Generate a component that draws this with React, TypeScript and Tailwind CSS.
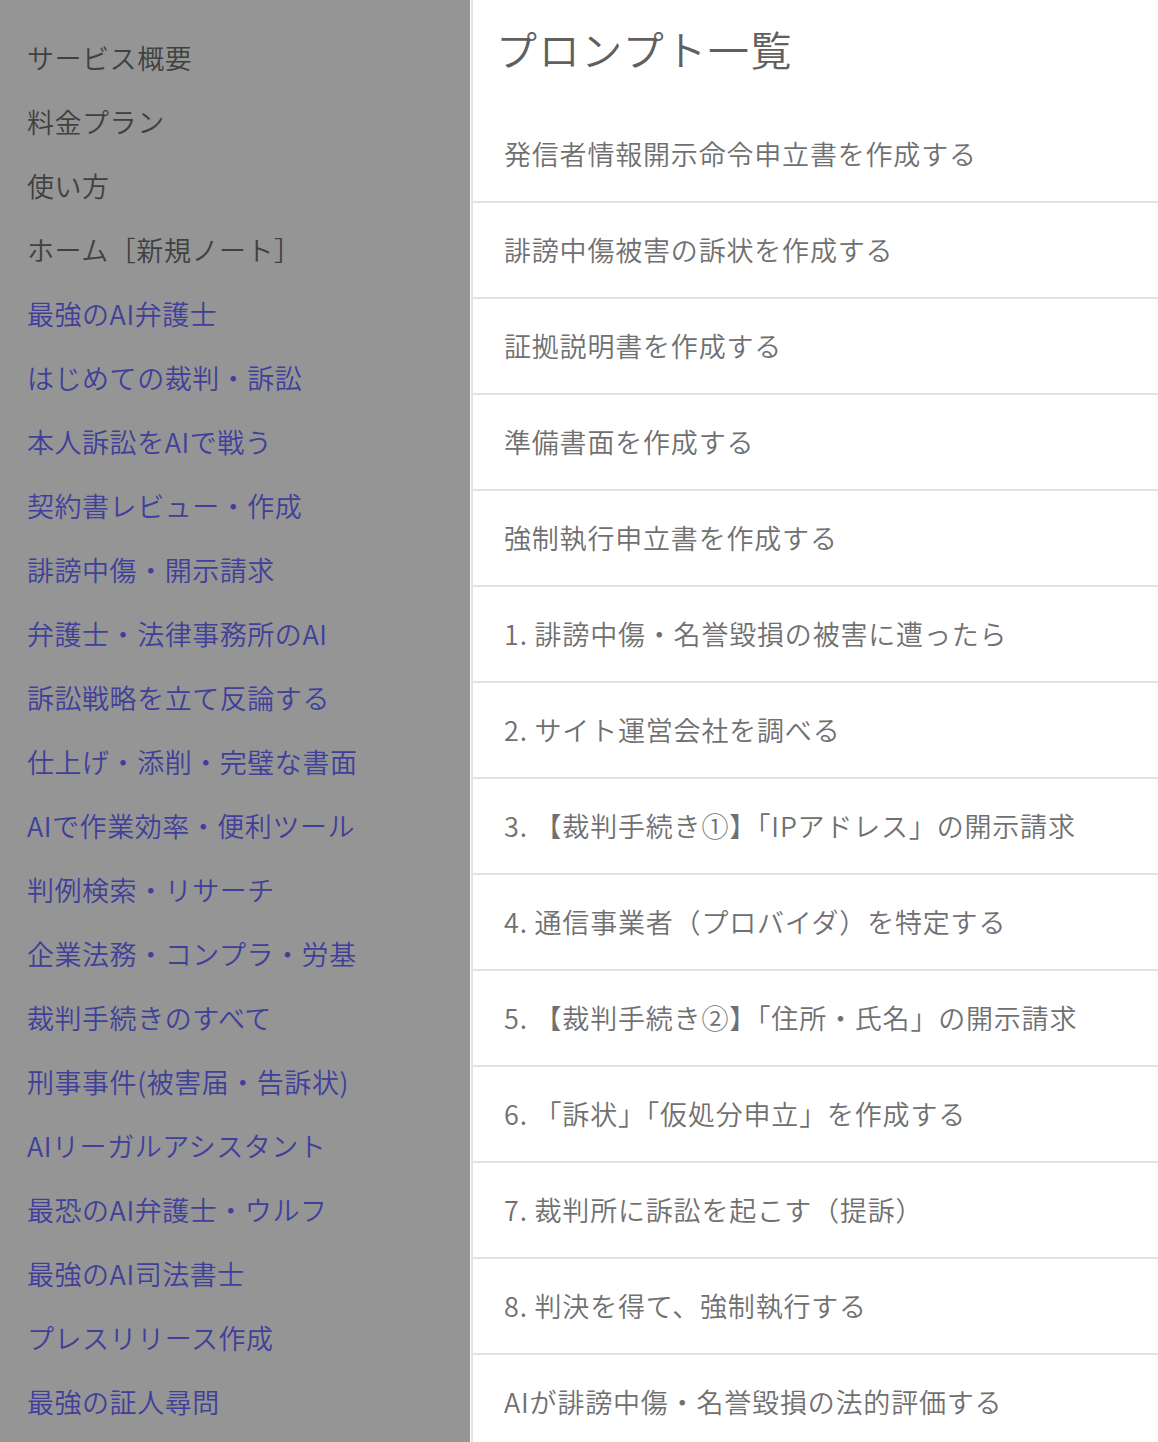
import React from "react";

const staticLinks = ["サービス概要", "料金プラン", "使い方", "ホーム［新規ノート］"];

const featureLinks = [
  "最強のAI弁護士",
  "はじめての裁判・訴訟",
  "本人訴訟をAIで戦う",
  "契約書レビュー・作成",
  "誹謗中傷・開示請求",
  "弁護士・法律事務所のAI",
  "訴訟戦略を立て反論する",
  "仕上げ・添削・完璧な書面",
  "AIで作業効率・便利ツール",
  "判例検索・リサーチ",
  "企業法務・コンプラ・労基",
  "裁判手続きのすべて",
  "刑事事件(被害届・告訴状)",
  "AIリーガルアシスタント",
  "最恐のAI弁護士・ウルフ",
  "最強のAI司法書士",
  "プレスリリース作成",
  "最強の証人尋問",
];

const prompts = [
  "発信者情報開示命令申立書を作成する",
  "誹謗中傷被害の訴状を作成する",
  "証拠説明書を作成する",
  "準備書面を作成する",
  "強制執行申立書を作成する",
  "1. 誹謗中傷・名誉毀損の被害に遭ったら",
  "2. サイト運営会社を調べる",
  "3. 【裁判手続き①】「IPアドレス」の開示請求",
  "4. 通信事業者（プロバイダ）を特定する",
  "5. 【裁判手続き②】「住所・氏名」の開示請求",
  "6. 「訴状」「仮処分申立」を作成する",
  "7. 裁判所に訴訟を起こす（提訴）",
  "8. 判決を得て、強制執行する",
  "AIが誹謗中傷・名誉毀損の法的評価する",
];

export default function App() {
  return (
    <div
      className="flex w-[1158px] h-[1442px] overflow-hidden bg-white font-[350]"
      style={{ fontFamily: '"Noto Sans CJK JP", "Noto Sans", sans-serif' }}
    >
      {/* side menu (dimmed) */}
      <nav className="w-[470px] shrink-0 bg-[#959595] pt-[26px] pl-[27px]">
        <ul>
          {staticLinks.map((t) => (
            <li key={t} className="h-[64px] flex items-center text-[27px] text-[#404040] tracking-[0.02em]">
              {t}
            </li>
          ))}
          {featureLinks.map((t) => (
            <li key={t} className="h-[64px] flex items-center text-[27px] text-[#40409a] tracking-[0.02em]">
              {t}
            </li>
          ))}
        </ul>
      </nav>

      {/* prompt list */}
      <main className="flex-1 ml-[1px] border-l-[2px] border-[#e2e2e2]">
        <h1 className="h-[107px] pl-[23px] pt-[20px] text-[41px] leading-[56px] text-[#606060] tracking-[0.04em]">
          プロンプト一覧
        </h1>
        <ul>
          {prompts.map((p) => (
            <li
              key={p}
              className="h-[96px] flex items-center pl-[31px] border-b-[2px] border-[#e2e2e2] text-[27px] text-[#707070] tracking-[0.03em]"
            >
              {p}
            </li>
          ))}
        </ul>
      </main>
    </div>
  );
}
